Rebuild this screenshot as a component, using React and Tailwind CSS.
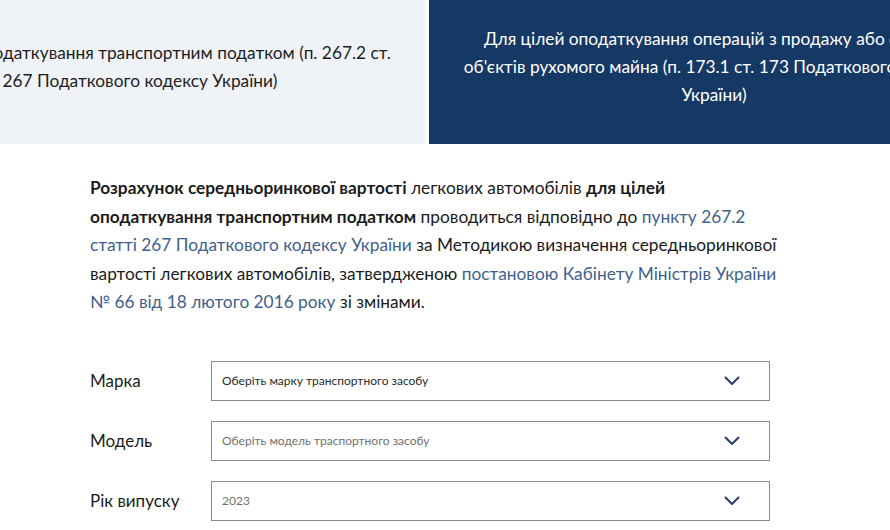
import React from "react";

const Chevron = () => (
  <svg width="16" height="10" viewBox="0 0 16 10" fill="none" className="shrink-0">
    <path d="M1.5 1.5L8 8L14.5 1.5" stroke="#2b3d63" strokeWidth="2" strokeLinecap="round" strokeLinejoin="round" />
  </svg>
);

function Field({ label, value, dark }) {
  return (
    <div className="flex items-center">
      <div className="w-[121px] text-[17px] text-[#1b1b1b]">{label}</div>
      <div className="flex h-[40px] w-[559px] items-center justify-between border border-[#8c8c8c] bg-white pl-[10px] pr-[29px]">
        <span className={`text-[12px] ${dark ? "text-[#2a2a2a]" : "text-[#707070]"}`}>{value}</span>
        <Chevron />
      </div>
    </div>
  );
}

export default function App() {
  const link = "text-[#3f5f8c]";
  return (
    <main className="h-[530px] w-[890px] overflow-hidden bg-white font-['Lato',sans-serif] text-[#1b1b1b]">
      <div className="-ml-[145px] flex h-[144px] w-[1150px] gap-[4px]">
        <div className="flex w-[570px] shrink-0 items-center justify-center bg-[#eff2f7] px-[29px] pb-[10px] text-center text-[17.3px] leading-[28px] text-[#1e1e1e]">
          Для цілей оподаткування транспортним податком (п. 267.2 ст. 267 Податкового кодексу України)
        </div>
        <div className="flex w-[570px] shrink-0 items-center justify-center bg-[#163865] px-[29px] pb-[10px] text-center text-[17.3px] leading-[28px] text-white">
          Для цілей оподаткування операцій з продажу або обміну об'єктів рухомого майна (п. 173.1 ст. 173 Податкового кодексу України)
        </div>
      </div>

      <section className="pl-[90px] pt-[30px]">
        <p className="w-[690px] text-[17.3px] leading-[28.5px]">
          <b>Розрахунок середньоринкової вартості</b> легкових автомобілів <b>для цілей оподаткування транспортним податком</b> проводиться відповідно до{" "}
          <span className={link}>пункту 267.2 статті 267 Податкового кодексу України</span> за Методикою визначення середньоринкової вартості легкових автомобілів, затвердженою{" "}
          <span className={link}>постановою Кабінету Міністрів України № 66 від 18 лютого 2016 року</span> зі змінами.
        </p>

        <div className="mt-[44px] flex flex-col gap-[20px]">
          <Field label="Марка" value="Оберіть марку транспортного засобу" dark />
          <Field label="Модель" value="Оберіть модель траспортного засобу" />
          <Field label="Рік випуску" value="2023" />
        </div>
      </section>
    </main>
  );
}
